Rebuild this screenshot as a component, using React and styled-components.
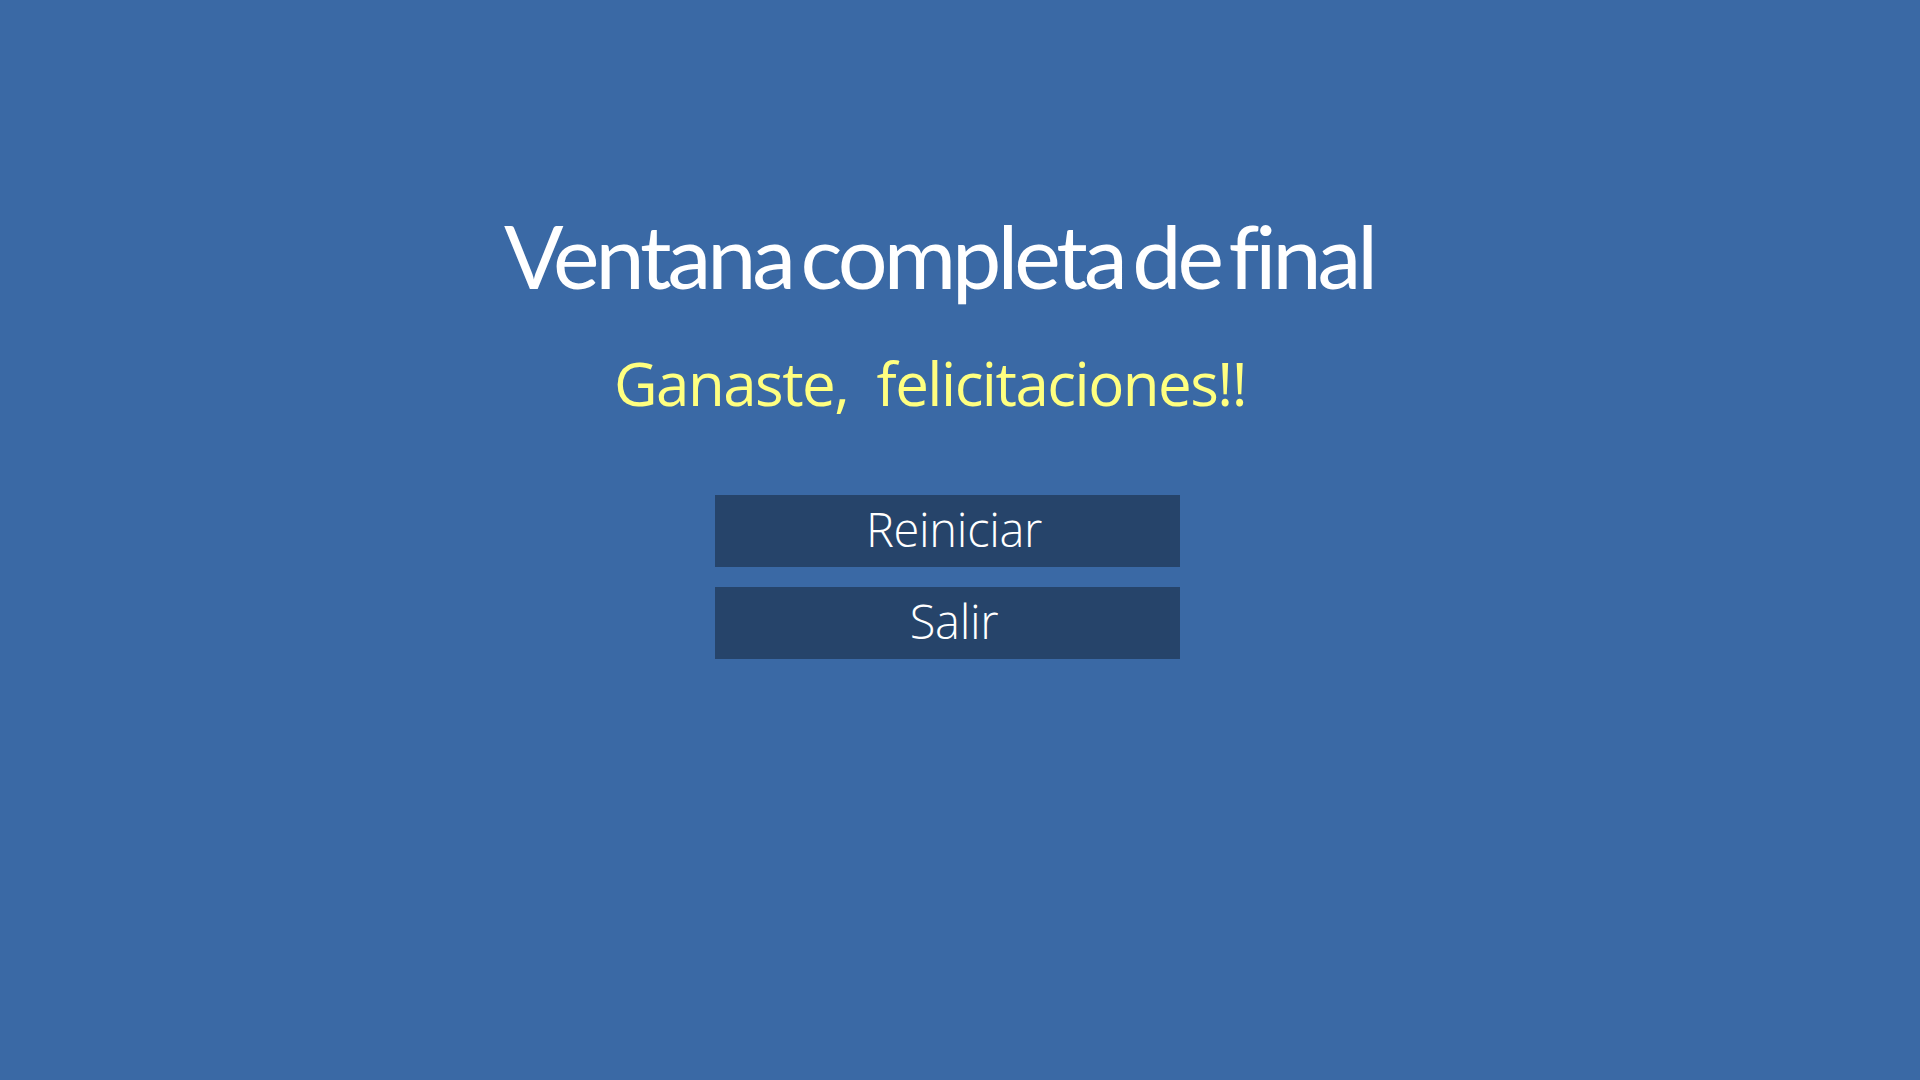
import React from "react";
import styled, { createGlobalStyle } from "styled-components";

const GlobalStyle = createGlobalStyle`
  html, body {
    margin: 0;
    padding: 0;
    background: #3a69a5;
  }
`;

const Screen = styled.div`
  width: 100%;
  height: 100vh;
  background: #3a69a5;
  display: flex;
  flex-direction: column;
  align-items: center;
  padding-top: 211px;
  box-sizing: border-box;
`;

const Title = styled.h1`
  margin: 0 42px 0 0;
  font-family: "Lato", "Open Sans", sans-serif;
  font-weight: 400;
  font-size: 88px;
  line-height: 1;
  letter-spacing: -4px;
  word-spacing: -10px;
  color: #ffffff;
`;

const Subtitle = styled.h2`
  margin: 54px 60px 0 0;
  font-family: "Open Sans", sans-serif;
  font-weight: 400;
  font-size: 60px;
  line-height: 1;
  letter-spacing: -1.5px;
  color: #ffff80;
`;

const Menu = styled.div`
  display: flex;
  flex-direction: column;
  gap: 20px;
  margin: 82px 26px 0 0;
`;

const MenuButton = styled.button`
  width: 465px;
  height: 72px;
  border: none;
  background: #26446a;
  color: #ffffff;
  font-family: "Open Sans", sans-serif;
  font-weight: 300;
  font-size: 47px;
  line-height: 1;
  letter-spacing: -0.3px;
  padding: 0 0 4px 14px;
  cursor: pointer;
`;

const App = () => {
  return (
    <>
      <GlobalStyle />
      <Screen>
        <Title>Ventana completa de final</Title>
        <Subtitle>Ganaste,&nbsp; felicitaciones!!</Subtitle>
        <Menu>
          <MenuButton>Reiniciar</MenuButton>
          <MenuButton>Salir</MenuButton>
        </Menu>
      </Screen>
    </>
  );
};

export default App;
